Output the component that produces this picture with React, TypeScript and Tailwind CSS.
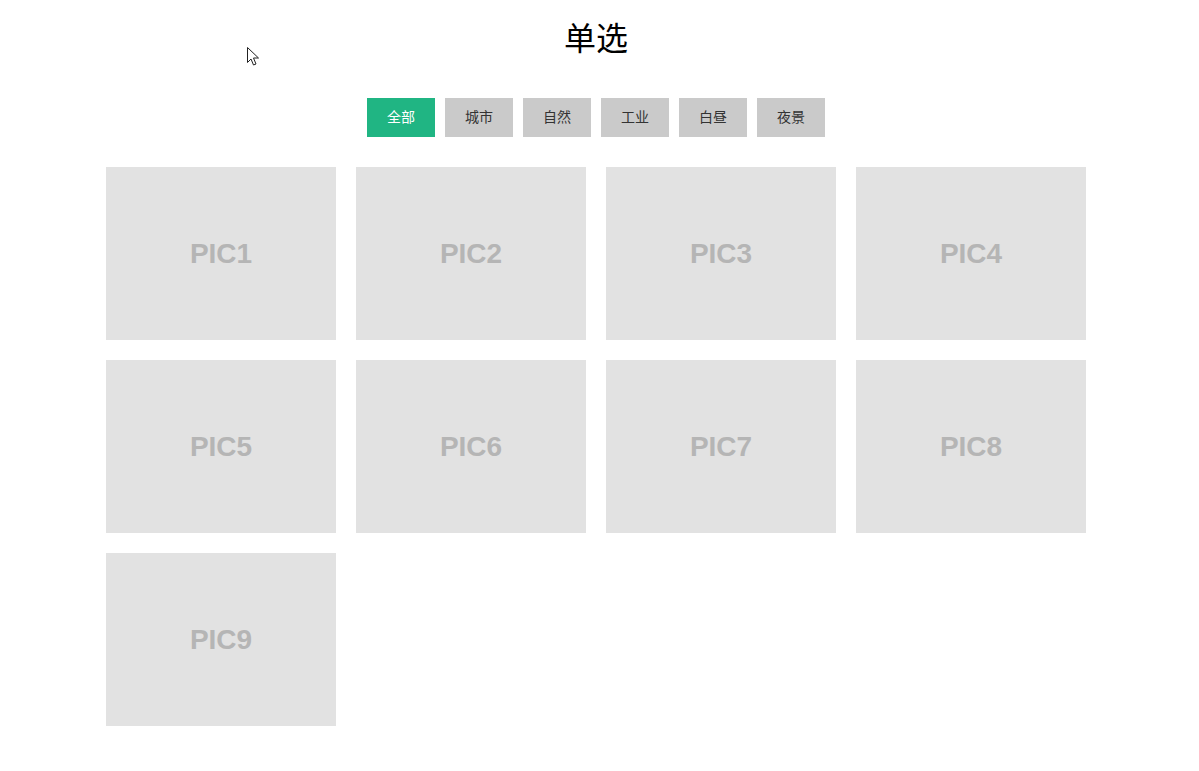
import { useState } from "react";

const tabs = ["全部", "城市", "自然", "工业", "白昼", "夜景"];
const pics = ["PIC1", "PIC2", "PIC3", "PIC4", "PIC5", "PIC6", "PIC7", "PIC8", "PIC9"];

export default function App() {
  const [active, setActive] = useState(0);

  return (
    <div className="relative min-h-[771px] bg-white font-['Liberation_Sans','Noto_Sans_CJK_SC',sans-serif]">
      {/* cursor from the capture */}
      <svg
        className="pointer-events-none absolute left-[247px] top-[47px]"
        width="13"
        height="20"
        viewBox="0 0 13 20"
      >
        <path
          d="M0.5 0.5 L0.5 15.5 L4 12 L6.5 18 L9 17 L6.5 11 L11.5 11 Z"
          fill="white"
          stroke="#222"
          strokeWidth="1"
          strokeLinejoin="miter"
        />
      </svg>

      <div className="ml-[106px] w-[980px] pt-[20px]">
        <h1 className="text-center text-[32px] leading-[38px] text-black">单选</h1>

        <div className="mt-[40px] flex justify-center gap-[10px]">
          {tabs.map((t, i) => (
            <button
              key={t}
              type="button"
              onClick={() => setActive(i)}
              className={`h-[39px] w-[68px] text-[14px] ${
                i === active ? "bg-[#20b583] text-white" : "bg-[#cacaca] text-[#333]"
              }`}
            >
              {t}
            </button>
          ))}
        </div>

        <div className="mt-[30px] grid grid-cols-4 gap-[20px]">
          {pics.map((p) => (
            <div
              key={p}
              className="flex h-[173px] items-center justify-center bg-[#e2e2e2] text-[28px] font-bold text-[#b5b5b5]"
            >
              {p}
            </div>
          ))}
        </div>
      </div>
    </div>
  );
}
